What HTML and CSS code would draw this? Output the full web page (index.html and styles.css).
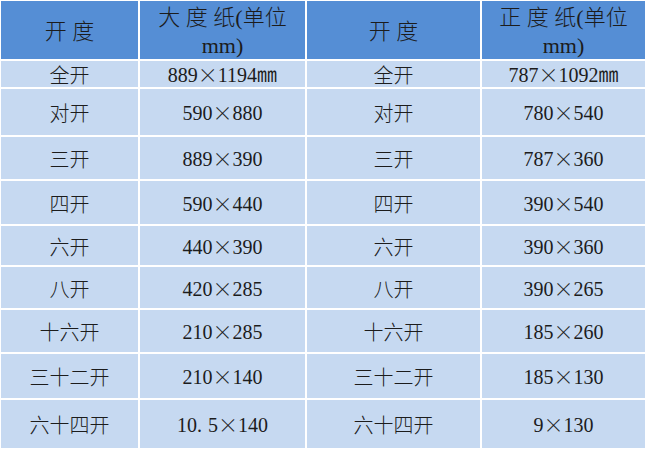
FILE: index.html
```html
<!DOCTYPE html>
<html lang="zh">
<head>
<meta charset="utf-8">
<title>开度</title>
<link rel="stylesheet" href="styles.css">
</head>
<body>
<div class="table">
  <div class="cell head">开 度</div>
  <div class="cell head">大 度 纸(单位<br>mm)</div>
  <div class="cell head">开 度</div>
  <div class="cell head">正 度 纸(单位<br>mm)</div>

  <div class="cell">全开</div><div class="cell num">889<span class="x">×</span>1194㎜</div><div class="cell">全开</div><div class="cell num">787<span class="x">×</span>1092㎜</div>
  <div class="cell">对开</div><div class="cell num">590<span class="x">×</span>880</div><div class="cell">对开</div><div class="cell num">780<span class="x">×</span>540</div>
  <div class="cell">三开</div><div class="cell num">889<span class="x">×</span>390</div><div class="cell">三开</div><div class="cell num">787<span class="x">×</span>360</div>
  <div class="cell">四开</div><div class="cell num">590<span class="x">×</span>440</div><div class="cell">四开</div><div class="cell num">390<span class="x">×</span>540</div>
  <div class="cell">六开</div><div class="cell num">440<span class="x">×</span>390</div><div class="cell">六开</div><div class="cell num">390<span class="x">×</span>360</div>
  <div class="cell">八开</div><div class="cell num">420<span class="x">×</span>285</div><div class="cell">八开</div><div class="cell num">390<span class="x">×</span>265</div>
  <div class="cell">十六开</div><div class="cell num">210<span class="x">×</span>285</div><div class="cell">十六开</div><div class="cell num">185<span class="x">×</span>260</div>
  <div class="cell">三十二开</div><div class="cell num">210<span class="x">×</span>140</div><div class="cell">三十二开</div><div class="cell num">185<span class="x">×</span>130</div>
  <div class="cell">六十四开</div><div class="cell num">10<span class="dot">.</span>5<span class="x">×</span>140</div><div class="cell">六十四开</div><div class="cell num">9<span class="x">×</span>130</div>
</div>
</body>
</html>
```
FILE: styles.css
```css
html, body {
  margin: 0;
  padding: 0;
  background: #ffffff;
}
.table {
  display: grid;
  grid-template-columns: 137px 165px 173px 163px;
  grid-template-rows: 58px 26px 46px 42px 43px 39px 41px 42px 44px 48px;
  gap: 2px;
  padding: 1px;
  width: max-content;
  font-family: "Liberation Serif", "Noto Sans CJK SC", serif;
  color: #1c1c1c;
}
.cell {
  background: #c6d9f1;
  display: flex;
  align-items: center;
  justify-content: center;
  text-align: center;
  font-size: 20px;
  line-height: 24px;
  padding-top: 2px;
  box-sizing: border-box;
  font-family: "Noto Sans CJK SC", sans-serif;
  font-weight: 300;
}
.cell.num {
  font-family: "Liberation Serif", "Noto Sans CJK SC", serif;
  font-weight: 400;
  font-size: 20px;
}
.x {
  font-family: "Noto Sans CJK SC", sans-serif;
  font-weight: 300;
}
.dot {
  margin-right: 6px;
}
.cell.head {
  background: #558ed5;
  font-size: 22px;
  line-height: 28px;
  padding-top: 3px;
  font-family: "Liberation Serif", "Noto Sans CJK SC", serif;
}
```
